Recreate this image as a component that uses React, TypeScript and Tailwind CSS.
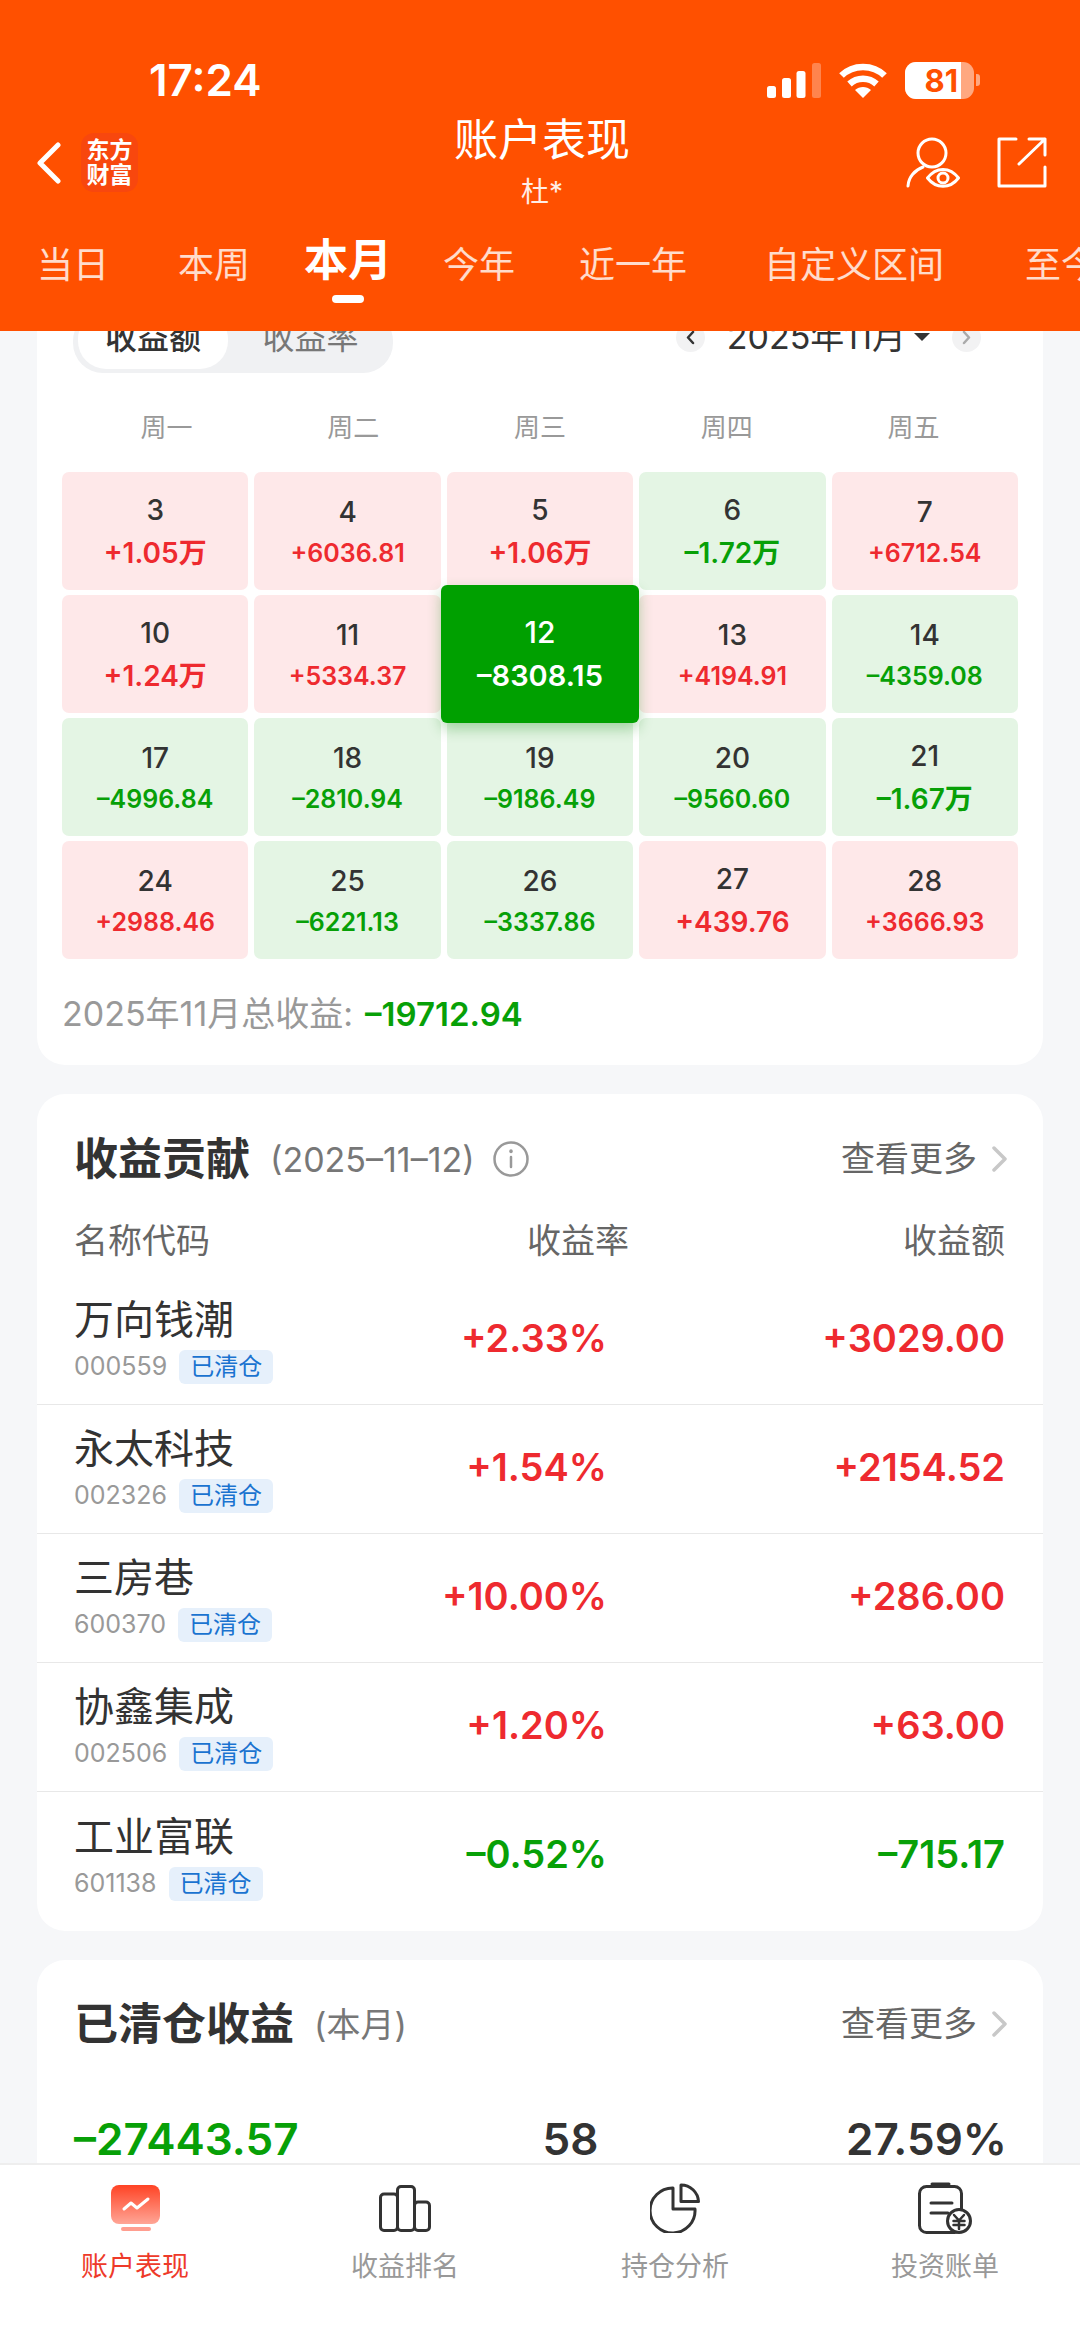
import React from "react";

type Day = { d: number; v: string; big?: boolean };

const weeks: Day[][] = [
  [
    { d: 3, v: "+1.05万", big: true },
    { d: 4, v: "+6036.81" },
    { d: 5, v: "+1.06万", big: true },
    { d: 6, v: "–1.72万", big: true },
    { d: 7, v: "+6712.54" },
  ],
  [
    { d: 10, v: "+1.24万", big: true },
    { d: 11, v: "+5334.37" },
    { d: 12, v: "–8308.15" },
    { d: 13, v: "+4194.91" },
    { d: 14, v: "–4359.08" },
  ],
  [
    { d: 17, v: "–4996.84" },
    { d: 18, v: "–2810.94" },
    { d: 19, v: "–9186.49" },
    { d: 20, v: "–9560.60" },
    { d: 21, v: "–1.67万", big: true },
  ],
  [
    { d: 24, v: "+2988.46" },
    { d: 25, v: "–6221.13" },
    { d: 26, v: "–3337.86" },
    { d: 27, v: "+439.76", big: true },
    { d: 28, v: "+3666.93" },
  ],
];

const holdings = [
  { name: "万向钱潮", code: "000559", rate: "+2.33%", amount: "+3029.00" },
  { name: "永太科技", code: "002326", rate: "+1.54%", amount: "+2154.52" },
  { name: "三房巷", code: "600370", rate: "+10.00%", amount: "+286.00" },
  { name: "协鑫集成", code: "002506", rate: "+1.20%", amount: "+63.00" },
  { name: "工业富联", code: "601138", rate: "–0.52%", amount: "–715.17" },
];

const tabs = [
  { label: "当日", cls: "ml-[37px]" },
  { label: "本周", cls: "ml-[69px]" },
  { label: "本月", cls: "ml-[54px]", active: true },
  { label: "今年", cls: "ml-[51px]" },
  { label: "近一年", cls: "ml-[64px]" },
  { label: "自定义区间", cls: "ml-[77px]" },
  { label: "至今", cls: "ml-[81px]" },
];

function DayCell({ day }: { day: Day }) {
  const selected = day.d === 12;
  const negative = day.v.startsWith("–");
  if (selected) {
    return (
      <div className="relative z-10 -mx-[5.5px] -my-[10px] flex flex-col items-center justify-center gap-[8px] rounded-[6px] bg-[#00a000] shadow-[0_6px_14px_rgba(0,130,0,0.3)]">
        <span className="text-[30px] leading-[36px] font-medium text-white">{day.d}</span>
        <span className="text-[29px] leading-[36px] font-semibold text-white">{day.v}</span>
      </div>
    );
  }
  return (
    <div
      className={`flex flex-col items-center justify-center gap-[7px] rounded-[7px] ${
        negative ? "bg-[#e4f5e4]" : "bg-[#fee8e9]"
      }`}
    >
      <span className="text-[28px] leading-[36px] font-medium text-[#333]">{day.d}</span>
      <span
        className={`font-semibold ${negative ? "text-[#07a007]" : "text-[#ee2a2f]"} ${
          day.big ? "text-[28px] leading-[36px]" : "text-[25px] leading-[32px]"
        }`}
      >
        {day.v}
      </span>
    </div>
  );
}

function MoreLink() {
  return (
    <div className="flex items-center gap-[15px] text-[34px] leading-[60px] text-[#666]">
      <span>查看更多</span>
      <svg width="15" height="26" viewBox="0 0 15 26" fill="none" stroke="#c8c8c8" strokeWidth="3.5" strokeLinecap="round" strokeLinejoin="round">
        <path d="M2 2l11 11L2 24" />
      </svg>
    </div>
  );
}

function SignalIcon() {
  return (
    <svg width="54" height="35" viewBox="0 0 54 35" fill="#fff">
      <rect x="0" y="23" width="9" height="12" rx="2.5" />
      <rect x="15" y="15" width="9" height="20" rx="2.5" />
      <rect x="29.5" y="8" width="9" height="27" rx="2.5" />
      <rect x="45" y="0" width="9" height="35" rx="2.5" fillOpacity="0.3" />
    </svg>
  );
}

function WifiIcon() {
  return (
    <svg width="48" height="35" viewBox="0 0 48 35" fill="none" stroke="#fff" strokeWidth="6.5">
      <path d="M2.5 12.5C14 1 34 1 45.5 12.5" />
      <path d="M10.5 21c7.5-7 19.500-7 27 0" />
      <path d="M24 35l-8-8c4.500-4 11.500-4 16 0z" fill="#fff" stroke="none" />
    </svg>
  );
}

function BatteryIcon() {
  return (
    <div className="flex items-center gap-[2px]">
      <div className="flex h-[37px] w-[69px] overflow-hidden rounded-[11px] bg-white/50">
        <div className="flex w-[56px] items-center justify-end bg-white pr-[3px] text-[31px] leading-none font-bold text-[#ff5000]">81</div>
      </div>
      <div className="h-[12px] w-[4px] rounded-r-[3px] bg-white/50" />
    </div>
  );
}

function WatchIcon() {
  return (
    <svg width="54" height="51" viewBox="0 0 54 51" fill="none" stroke="#fff" strokeWidth="3" strokeLinecap="round" strokeLinejoin="round">
      <circle cx="26" cy="16" r="14" />
      <path d="M2 49c.5-9 7-16 15-19" />
      <path d="M21.500 41C30 29.500 44 29.500 52.500 41 44 52 30 52 21.500 41z" />
      <circle cx="37" cy="41" r="5" />
    </svg>
  );
}

function ShareIcon() {
  return (
    <svg width="50" height="51" viewBox="0 0 50 51" fill="none" stroke="#fff" strokeWidth="3" strokeLinecap="round" strokeLinejoin="round">
      <path d="M19 2H2v47h46V30" />
      <path d="M22 27L48 2M32 2h16v16" />
    </svg>
  );
}

function AccountTabIcon() {
  return (
    <svg width="49" height="46" viewBox="0 0 49 46">
      <defs>
        <linearGradient id="accountFill" x1="0" y1="0" x2="0" y2="1">
          <stop offset="0" stopColor="#ff4324" />
          <stop offset="1" stopColor="#ffa596" />
        </linearGradient>
      </defs>
      <rect x="0" y="0" width="49" height="39" rx="8" fill="url(#accountFill)" />
      <rect x="10" y="42" width="30" height="4" rx="2" fill="#ff9e90" />
      <path d="M13 24l7-6 6 5 11-9" fill="none" stroke="#fff" strokeWidth="3" strokeLinecap="round" strokeLinejoin="round" />
    </svg>
  );
}

function RankTabIcon() {
  return (
    <svg width="52" height="47" viewBox="0 0 52 47" fill="none" stroke="#333" strokeWidth="3" strokeLinejoin="round">
      <rect x="1.500" y="9" width="17" height="36.500" rx="3.500" />
      <rect x="18.500" y="1.500" width="17" height="44" rx="3.500" />
      <rect x="35.500" y="17" width="15" height="28.500" rx="3.500" />
    </svg>
  );
}

function PieTabIcon() {
  return (
    <svg width="50" height="50" viewBox="0 0 50 50" fill="none" stroke="#333" strokeWidth="3" strokeLinejoin="round">
      <path d="M23 5v21h22A22.500 22.500 0 1 1 23 5z" />
      <path d="M31 2v16.500h17.500A17.500 17.500 0 0 0 31 2z" />
    </svg>
  );
}

function BillTabIcon() {
  return (
    <svg width="54" height="52" viewBox="0 0 54 52" fill="none" stroke="#333" strokeWidth="3" strokeLinecap="round">
      <rect x="1.500" y="4.500" width="42" height="46" rx="7" />
      <path d="M14 2h17" />
      <path d="M13 21h21M13 31h17" />
      <circle cx="41" cy="39" r="11.500" fill="#fff" />
      <path d="M36 33l5 5.500 5-5.500M35.500 39h11M35.500 43h11M41 38.500V47" strokeWidth="2.500" />
    </svg>
  );
}

export default function App() {
  return (
    <div className="flex h-[2347px] w-[1080px] flex-col overflow-hidden bg-[#f6f7f9] font-[family-name:Inter,'Noto_Sans_CJK_SC',sans-serif]">
      <header className="h-[331px] shrink-0 overflow-hidden bg-[#ff5000] text-white">
        <div className="mt-[58px] flex h-[44px] items-center justify-between pl-[149px] pr-[100px]">
          <span className="text-[44px] leading-none font-semibold">17:24</span>
          <div className="flex items-center gap-[18px]">
            <SignalIcon />
            <WifiIcon />
            <BatteryIcon />
          </div>
        </div>

        <div className="mt-[13px] flex h-[95px] items-center justify-between pl-[37px] pr-[33px]">
          <div className="flex w-[200px] items-center gap-[20px]">
            <svg width="24" height="42" viewBox="0 0 24 42" fill="none" stroke="#fff" strokeWidth="5" strokeLinecap="round" strokeLinejoin="round">
              <path d="M21 3L3 21l18 18" />
            </svg>
            <div className="flex h-[59px] w-[57px] flex-col items-center justify-center rounded-[13px] bg-[#f8470e] text-[23px] leading-[25px] font-bold">
              <span>东方</span>
              <span>财富</span>
            </div>
          </div>
          <div className="flex flex-col items-center">
            <span className="text-[44px] leading-[50px]">账户表现</span>
            <span className="mt-[9px] text-[28px] leading-[36px] text-white/90">杜*</span>
          </div>
          <div className="flex w-[200px] items-center justify-end gap-[37px]">
            <WatchIcon />
            <ShareIcon />
          </div>
        </div>

        <nav className="mt-[25px] flex h-[60px] items-center whitespace-nowrap">
          {tabs.map((t) =>
            t.active ? (
              <span key={t.label} className={`relative -mt-[10px] text-[44px] leading-[50px] font-bold ${t.cls}`}>
                {t.label}
                <span className="absolute top-[60px] left-[28px] h-[8px] w-[32px] rounded-full bg-white" />
              </span>
            ) : (
              <span key={t.label} className={`shrink-0 text-[36px] leading-[44px] text-white/80 ${t.cls}`}>
                {t.label}
              </span>
            ),
          )}
        </nav>
      </header>

      <main className="min-h-0 flex-1 overflow-hidden">
        <div className="-mt-[40px] flex flex-col gap-[29px] px-[37px]">
          <section className="rounded-[28px] bg-white px-[25px] pt-[20px] pb-[31px]">
            <div className="flex items-center justify-between pl-[11px] pr-[37px]">
              <div className="flex h-[62px] w-[320px] rounded-[30px] bg-[#f0f1f3] pl-[5px] pb-[4px] text-[32px] leading-[54px]">
                <div className="w-[150px] rounded-[28px] bg-white text-center font-medium text-[#333]">收益额</div>
                <div className="flex-1 text-center text-[#777]">收益率</div>
              </div>
              <div className="flex items-center gap-[22px] pb-[10px]">
                <div className="flex h-[29px] w-[29px] items-center justify-center rounded-full bg-[#f2f2f3]">
                  <svg width="11" height="15" viewBox="0 0 11 15" fill="none" stroke="#333" strokeWidth="2.500" strokeLinecap="round" strokeLinejoin="round">
                    <path d="M8 2L3 7.500 8 13" />
                  </svg>
                </div>
                <div className="flex items-center gap-[8px] text-[34px] leading-[40px] text-[#333]">
                  <span>2025年11月</span>
                  <span className="h-0 w-0 border-x-[8px] border-t-[8px] border-x-transparent border-t-[#333]" />
                </div>
                <div className="flex h-[29px] w-[29px] items-center justify-center rounded-full bg-[#f2f2f3]">
                  <svg width="11" height="15" viewBox="0 0 11 15" fill="none" stroke="#aaa" strokeWidth="2.500" strokeLinecap="round" strokeLinejoin="round">
                    <path d="M3 2l5 5.500L3 13" />
                  </svg>
                </div>
              </div>
            </div>

            <div className="mt-[40px] mb-[29px] grid grid-cols-5 px-[11px] text-center text-[26px] leading-[30px] text-[#999]">
              {["周一", "周二", "周三", "周四", "周五"].map((w) => (
                <span key={w}>{w}</span>
              ))}
            </div>

            <div className="grid grid-cols-5 auto-rows-[118px] gap-x-[6px] gap-y-[5px]">
              {weeks.flat().map((day) => (
                <DayCell key={day.d} day={day} />
              ))}
            </div>

            <div className="mt-[35px] flex items-center gap-[12px] leading-[40px]">
              <span className="text-[34px] text-[#999]">2025年11月总收益:</span>
              <span className="text-[33px] font-semibold text-[#07a007]">–19712.94</span>
            </div>
          </section>

          <section className="rounded-[28px] bg-white pt-[35px] pb-[10px]">
            <div className="flex items-center justify-between pl-[37px] pr-[36px]">
              <div className="flex items-center">
                <h2 className="text-[44px] leading-[60px] font-bold text-[#333]">收益贡献</h2>
                <span className="ml-[20px] text-[34px] text-[#777]">(2025–11–12)</span>
                <svg className="ml-[18px]" width="36" height="36" viewBox="0 0 36 36" fill="none" stroke="#999" strokeWidth="2.500" strokeLinecap="round">
                  <circle cx="18" cy="18" r="16.500" />
                  <path d="M18 16v10" />
                  <path d="M18 10v.5" strokeWidth="3.500" />
                </svg>
              </div>
              <MoreLink />
            </div>

            <div className="mt-[32px] grid grid-cols-[300px_255px_1fr] pl-[37px] pr-[38px] text-[34px] leading-[40px] text-[#666]">
              <span>名称代码</span>
              <span className="text-right">收益率</span>
              <span className="text-right">收益额</span>
            </div>

            <div className="mt-[15px]">
              {holdings.map((h, i) => {
                const negative = h.rate.startsWith("–");
                const tone = negative ? "text-[#07a007]" : "text-[#ee2a2f]";
                return (
                  <div
                    key={h.code}
                    className={`grid h-[129px] grid-cols-[300px_233px_1fr] items-center pl-[37px] pr-[38px] ${
                      i < holdings.length - 1 ? "border-b border-[#e8e8e8]" : ""
                    }`}
                  >
                    <div>
                      <div className="text-[40px] leading-[52px] text-[#333]">{h.name}</div>
                      <div className="mt-[2px] flex items-center gap-[12px]">
                        <span className="text-[25px] text-[#999]">{h.code}</span>
                        <span className="rounded-[6px] bg-[#e6f0fb] px-[11px] text-[24px] leading-[34px] text-[#1a73d0]">已清仓</span>
                      </div>
                    </div>
                    <span className={`pb-[4px] text-right text-[38px] font-semibold ${tone}`}>{h.rate}</span>
                    <span className={`pb-[4px] text-right text-[38px] font-semibold ${tone}`}>{h.amount}</span>
                  </div>
                );
              })}
            </div>
          </section>

          <section className="rounded-[28px] bg-white pl-[37px] pr-[36px] pt-[34px] pb-[40px]">
            <div className="flex items-center justify-between">
              <div className="flex items-center">
                <h2 className="text-[44px] leading-[60px] font-bold text-[#333]">已清仓收益</h2>
                <span className="ml-[20px] text-[34px] text-[#777]">(本月)</span>
              </div>
              <MoreLink />
            </div>
            <div className="mt-[60px] grid grid-cols-[360px_1fr_300px] text-[44px] leading-[50px] font-semibold text-[#333]">
              <span className="text-[#07a007]">–27443.57</span>
              <span className="text-center">58</span>
              <span className="text-right">27.59%</span>
            </div>
          </section>
        </div>
      </main>

      <footer className="grid h-[184px] shrink-0 grid-cols-4 border-t-2 border-[#eeeeee] bg-white pt-[18px] text-[27px] leading-[36px] text-[#999]">
        <div className="flex flex-col items-center">
          <div className="flex h-[50px] items-center"><AccountTabIcon /></div>
          <span className="mt-[16px] text-[#ee3a2a]">账户表现</span>
        </div>
        <div className="flex flex-col items-center">
          <div className="flex h-[50px] items-center"><RankTabIcon /></div>
          <span className="mt-[16px]">收益排名</span>
        </div>
        <div className="flex flex-col items-center">
          <div className="flex h-[50px] items-center"><PieTabIcon /></div>
          <span className="mt-[16px]">持仓分析</span>
        </div>
        <div className="flex flex-col items-center">
          <div className="flex h-[50px] items-center"><BillTabIcon /></div>
          <span className="mt-[16px]">投资账单</span>
        </div>
      </footer>
    </div>
  );
}
